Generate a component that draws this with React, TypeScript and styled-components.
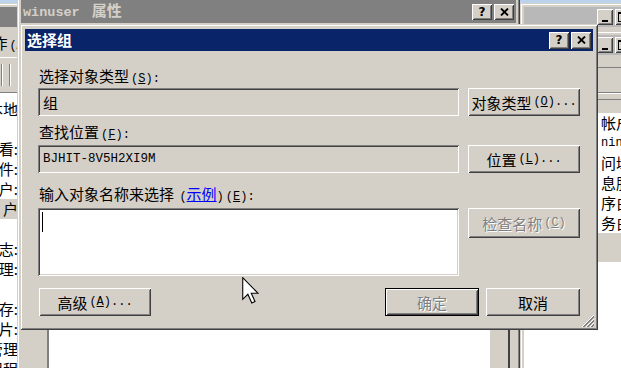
import React from "react";
import styled, { createGlobalStyle, css } from "styled-components";

const FACE = "#d4d0c8";
const SHADOW = "#808080";
const DARK = "#404040";
const NAVY = "#0a246a";
const CJK = `"Noto Sans CJK SC", "Liberation Sans", sans-serif`;
const MONO = `"Liberation Mono", "DejaVu Sans Mono", monospace`;

const GlobalStyle = createGlobalStyle`
  * { box-sizing: border-box; }
  html, body { margin: 0; padding: 0; background: #ffffff; }
  body { font-family: ${CJK}; font-size: 15px; color: #000000; }
`;

const raised = css`
  box-shadow:
    inset 1px 1px 0 #ffffff,
    inset -1px -1px 0 ${DARK},
    inset 2px 2px 0 ${FACE},
    inset -2px -2px 0 ${SHADOW};
`;

const sunken = css`
  box-shadow:
    inset 1px 1px 0 ${SHADOW},
    inset -1px -1px 0 #ffffff,
    inset 2px 2px 0 ${DARK},
    inset -2px -2px 0 ${FACE};
`;

const frame = css`
  background: ${FACE};
  box-shadow:
    inset 1px 1px 0 ${FACE},
    inset -1px -1px 0 ${DARK},
    inset 2px 2px 0 #ffffff,
    inset -2px -2px 0 ${SHADOW};
`;

const Desktop = styled.div`
  position: relative;
  width: 621px;
  height: 368px;
  overflow: hidden;
  background: #bcd3ec;
`;

// windows sit on the desktop at their own spot
const Window = styled.div<{ $x: number; $y: number; $w: number; $h: number }>`
  position: absolute;
  left: ${(p) => p.$x}px;
  top: ${(p) => p.$y}px;
  width: ${(p) => p.$w}px;
  height: ${(p) => p.$h}px;
  ${frame}
  padding: 4px;
  display: flex;
  flex-direction: column;
  overflow: hidden;
`;

const TitleBar = styled.div<{ $active?: boolean; $h: number; $bg?: string }>`
  flex: none;
  height: ${(p) => p.$h}px;
  background: ${(p) => p.$bg ?? (p.$active ? NAVY : SHADOW)};
  color: ${(p) => (p.$active ? "#ffffff" : FACE)};
  display: flex;
  align-items: center;
  padding: 0 2px 0 2px;
  font-weight: bold;
  font-size: 15px;
  white-space: nowrap;
`;

const TitleText = styled.span`
  flex: 1;
  overflow: hidden;
  line-height: 20px;
`;

const TitleMono = styled.span`
  font-family: ${MONO};
  font-size: 13.5px;
  margin-right: 12px;
`;

const CaptionButtons = styled.div`
  display: flex;
  gap: 2px;
`;

const CaptionButton = styled.div<{ $w: number; $h: number }>`
  width: ${(p) => p.$w}px;
  height: ${(p) => p.$h}px;
  background: ${FACE};
  ${raised}
  display: flex;
  align-items: center;
  justify-content: center;
  color: #000000;
  font-family: "DejaVu Sans", sans-serif;
  font-weight: bold;
  font-size: 12px;
  line-height: 1;
`;

const CloseIcon = () => (
  <svg width="9" height="8" viewBox="0 0 9 8">
    <path d="M1 0.5 L8 7.5 M8 0.5 L1 7.5" stroke="#000" strokeWidth="1.8" />
  </svg>
);

const MinIcon = () => (
  <svg width="8" height="12" viewBox="0 0 8 12">
    <rect x="1" y="9" width="6" height="2" fill="#000" />
  </svg>
);

const MaxIcon = () => (
  <svg width="10" height="10" viewBox="0 0 10 10">
    <rect x="0.5" y="0.5" width="9" height="9" fill="none" stroke="#000" />
    <rect x="0" y="1" width="10" height="1" fill="#000" />
  </svg>
);

/* ---------- left background window ---------- */

const LeftMenu = styled.div`
  height: 30px;
  padding-top: 6px;
  text-align: right;
  white-space: nowrap;
  line-height: 20px;
`;

const LeftToolbar = styled.div`
  height: 36px;
  border-top: 1px solid #ffffff;
  border-bottom: 1px solid ${SHADOW};
  display: flex;
  justify-content: flex-end;
  align-items: center;
  gap: 6px;
  padding-right: 6px;
`;

const ToolSep = styled.div`
  width: 2px;
  height: 22px;
  border-left: 1px solid ${SHADOW};
  border-right: 1px solid #ffffff;
`;

const SideList = styled.div`
  flex: 1;
  background: #ffffff;
  padding-top: 6px;
`;

const SideRow = styled.div<{ $selected?: boolean }>`
  height: 20px;
  line-height: 20px;
  text-align: right;
  white-space: nowrap;
  margin-right: -1px;
  background: ${(p) => (p.$selected ? FACE : "transparent")};
`;

/* ---------- winuser window ---------- */

const WinBody = styled.div`
  flex: 1;
  display: flex;
  padding: 300px 6px 0 26px;
`;

const TabPage = styled.div`
  flex: 1;
  display: grid;
  grid-template-columns: 1fr 18px;
  border-left: 2px solid ${SHADOW};
  border-right: 2px solid ${DARK};
`;

const WhiteArea = styled.div`
  background: #ffffff;
`;

/* ---------- right background windows ---------- */

const RMenu = styled.div`
  height: 13px;
  border-bottom: 1px solid ${SHADOW};
`;

const RToolbar = styled.div`
  height: 25px;
  border-bottom: 1px solid ${SHADOW};
`;

const RStrip = styled.div`
  height: 7px;
  border-top: 1px solid #ffffff;
  border-bottom: 1px solid ${SHADOW};
`;

const RHeader = styled.div`
  height: 13px;
`;

const RList = styled.div`
  height: 120px;
  background: #ffffff;
  padding-left: 77px;
`;

const RRow = styled.div<{ $mono?: boolean }>`
  height: 20px;
  line-height: 20px;
  white-space: nowrap;
  font-family: ${(p) => (p.$mono ? MONO : CJK)};
  font-size: ${(p) => (p.$mono ? 12 : 15)}px;
`;

const RBand = styled.div`
  height: 29px;
`;

const RWhite = styled.div`
  flex: 1;
  background: #ffffff;
`;

/* ---------- the dialog ---------- */

const Dialog = styled.div`
  position: absolute;
  left: 20px;
  top: 24px;
  width: 578px;
  height: 306px;
  ${frame}
  padding: 5px 5px 0;
  display: flex;
  flex-direction: column;
`;

const DialogBody = styled.div`
  padding: 16px 13px 0 13px;
  display: flex;
  flex-direction: column;
`;

const Label = styled.div<{ $top?: number; $bottom?: number }>`
  margin: ${(p) => p.$top ?? 0}px 0 ${(p) => p.$bottom ?? 0}px 1px;
  height: 18px;
  line-height: 18px;
  white-space: nowrap;
`;

const Accel = styled.span`
  font-family: ${MONO};
  font-size: 12px;
  margin-left: 2px;
`;

const Link = styled.span`
  color: #0000ff;
  text-decoration: underline;
`;

const Row = styled.div`
  display: grid;
  grid-template-columns: 1fr 112px;
  column-gap: 9px;
  align-items: start;
`;

const Field = styled.div<{ $mono?: boolean }>`
  height: 28px;
  background: ${FACE};
  ${sunken}
  display: flex;
  align-items: center;
  padding: 0 5px;
  font-family: ${(p) => (p.$mono ? MONO : CJK)};
  font-size: ${(p) => (p.$mono ? 12.5 : 15)}px;
  white-space: nowrap;
`;

const TextBox = styled.div`
  height: 68px;
  background: #ffffff;
  ${sunken}
  padding: 3px 4px;
`;

const Caret = styled.div`
  width: 1px;
  height: 20px;
  margin: 1px 0 0 0;
  background: #000000;
`;

const Button = styled.div<{ $w?: number; $h?: number; $disabled?: boolean; $default?: boolean }>`
  width: ${(p) => (p.$w ? `${p.$w}px` : "auto")};
  height: ${(p) => p.$h ?? 28}px;
  background: ${FACE};
  border: ${(p) => (p.$default ? "1px solid #000000" : "none")};
  ${raised}
  display: flex;
  align-items: center;
  justify-content: center;
  white-space: nowrap;
  color: ${(p) => (p.$disabled ? SHADOW : "#000000")};
  text-shadow: ${(p) => (p.$disabled ? "1px 1px 0 #ffffff" : "none")};
`;

const Footer = styled.div`
  margin-top: 12px;
  display: flex;
  justify-content: space-between;
  align-items: center;
  padding-left: 1px;
`;

const FooterRight = styled.div`
  display: flex;
  gap: 7px;
`;

const Grip = styled.svg`
  position: absolute;
  right: 3px;
  bottom: 2px;
`;

const Cursor = styled.svg`
  position: absolute;
  left: 242px;
  top: 277px;
`;

const hot = (k: string, tail = "") => (
  <Accel>
    (<u>{k}</u>){tail}
  </Accel>
);

export default function App() {
  return (
    <>
      <GlobalStyle />
      <Desktop>
        {/* left window, mostly hidden */}
        <Window $x={-183} $y={3} $w={204} $h={400}>
          <TitleBar $h={20} />
          <LeftMenu>
            操作<Accel style={{ marginRight: -14 }}>(A)</Accel>
          </LeftMenu>
          <LeftToolbar>
            <ToolSep />
            <ToolSep />
          </LeftToolbar>
          <SideList>
            <SideRow>本地</SideRow>
            <SideRow />
            <SideRow>查看:</SideRow>
            <SideRow>文件:</SideRow>
            <SideRow>用户:</SideRow>
            <SideRow $selected>户</SideRow>
            <SideRow />
            <SideRow>日志:</SideRow>
            <SideRow>管理:</SideRow>
            <SideRow />
            <SideRow>储存:</SideRow>
            <SideRow>碎片:</SideRow>
            <SideRow>管理</SideRow>
            <SideRow>应用程</SideRow>
          </SideList>
        </Window>

        {/* right windows, mostly hidden */}
        <Window $x={520} $y={3} $w={135} $h={30}>
          <TitleBar $h={20} $bg="#b8b8b8">
            <TitleText />
            <CaptionButtons>
              <CaptionButton $w={16} $h={16}>
                <MinIcon />
              </CaptionButton>
              <CaptionButton $w={16} $h={16}>
                <MaxIcon />
              </CaptionButton>
              <CaptionButton $w={16} $h={16}>
                <CloseIcon />
              </CaptionButton>
            </CaptionButtons>
          </TitleBar>
        </Window>
        <Window $x={520} $y={31} $w={135} $h={400}>
          <TitleBar $h={20} $bg="#b8b8b8">
            <TitleText />
            <CaptionButtons>
              <CaptionButton $w={16} $h={16}>
                <MinIcon />
              </CaptionButton>
              <CaptionButton $w={16} $h={16}>
                <MaxIcon />
              </CaptionButton>
              <CaptionButton $w={16} $h={16}>
                <CloseIcon />
              </CaptionButton>
            </CaptionButtons>
          </TitleBar>
          <RMenu />
          <RToolbar />
          <RStrip />
          <RHeader />
          <RList>
            <RRow>帐户名</RRow>
            <RRow $mono>ninistrator</RRow>
            <RRow>问域</RRow>
            <RRow>息服务</RRow>
            <RRow>序白</RRow>
            <RRow>务白</RRow>
          </RList>
          <RBand />
          <RWhite />
        </Window>

        {/* winuser properties window */}
        <Window $x={17} $y={-4} $w={503} $h={400}>
          <TitleBar $h={23}>
            <TitleText>
              <TitleMono>winuser</TitleMono>属性
            </TitleText>
            <CaptionButtons>
              <CaptionButton $w={20} $h={16}>?</CaptionButton>
              <CaptionButton $w={20} $h={16}>
                <CloseIcon />
              </CaptionButton>
            </CaptionButtons>
          </TitleBar>
          <WinBody>
            <TabPage>
              <WhiteArea />
              <div />
            </TabPage>
          </WinBody>
        </Window>

        {/* 选择组 dialog */}
        <Dialog>
          <TitleBar $active $h={22}>
            <TitleText>选择组</TitleText>
            <CaptionButtons>
              <CaptionButton $w={20} $h={17}>?</CaptionButton>
              <CaptionButton $w={20} $h={17}>
                <CloseIcon />
              </CaptionButton>
            </CaptionButtons>
          </TitleBar>
          <DialogBody>
            <Label $bottom={3}>选择对象类型{hot("S", ":")}</Label>
            <Row>
              <Field>组</Field>
              <Button>对象类型{hot("O", "...")}</Button>
            </Row>

            <Label $top={7} $bottom={4}>
              查找位置{hot("F", ":")}
            </Label>
            <Row>
              <Field $mono>BJHIT-8V5H2XI9M</Field>
              <Button>位置{hot("L", "...")}</Button>
            </Row>

            <Label $top={12} $bottom={5}>
              输入对象名称来选择 <Accel>(</Accel>
              <Link>示例</Link>
              <Accel style={{ marginLeft: 0 }}>)</Accel>
              {hot("E", ":")}
            </Label>
            <Row>
              <TextBox>
                <Caret />
              </TextBox>
              <Button $h={30} $disabled>
                检查名称{hot("C")}
              </Button>
            </Row>

            <Footer>
              <Button $w={112}>高级{hot("A", "...")}</Button>
              <FooterRight>
                <Button $w={94} $default $disabled>
                  确定
                </Button>
                <Button $w={94}>取消</Button>
              </FooterRight>
            </Footer>
          </DialogBody>
          <Grip width="14" height="14" viewBox="0 0 14 14">
            <path d="M13 1 L1 13 M13 5 L5 13 M13 9 L9 13" stroke="#ffffff" strokeWidth="1" />
            <path d="M13 2 L2 13 M13 3 L3 13 M13 6 L6 13 M13 7 L7 13 M13 10 L10 13 M13 11 L11 13" stroke={SHADOW} strokeWidth="1" />
          </Grip>
        </Dialog>

        <Cursor width="17" height="27" viewBox="0 0 12.5 20">
          <path
            d="M0.5 0.5 L0.5 16.5 L4.3 12.8 L7.2 19.3 L9.6 18.2 L6.8 12 L11.8 12 Z"
            fill="#ffffff"
            stroke="#000000"
            strokeWidth="0.8"
            strokeLinejoin="miter"
          />
        </Cursor>
      </Desktop>
    </>
  );
}
